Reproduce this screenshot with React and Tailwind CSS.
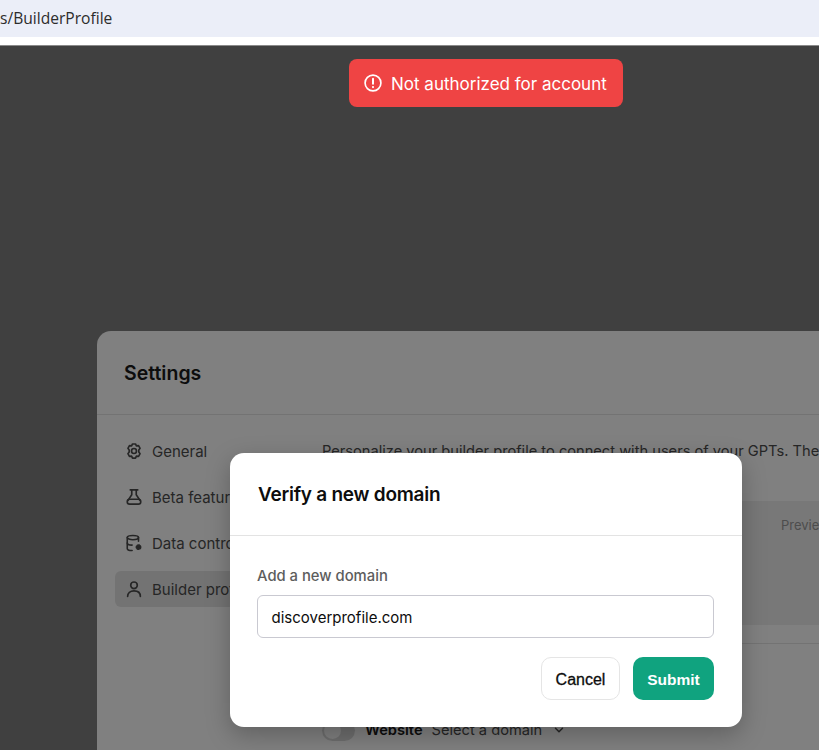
import React from "react";
import { ChevronDown } from "lucide-react";

function GearIcon() {
  return (
    <svg width="18" height="18" viewBox="0 0 24 24" fill="none" stroke="currentColor" strokeWidth="2.2" strokeLinejoin="round">
      <path d="M10 2.6h4l1.2 2.6 2.9-.3 2 3.5L18.4 10.7v2.6l1.7 2.3-2 3.5-2.9-.3L14 21.4h-4l-1.2-2.6-2.9.3-2-3.5 1.7-2.3v-2.6L3.9 8.4l2-3.5 2.9.3z" />
      <circle cx="12" cy="12" r="3.3" />
    </svg>
  );
}

function FlaskIcon() {
  return (
    <svg width="18" height="18" viewBox="0 0 24 24" fill="none" stroke="currentColor" strokeWidth="2.2" strokeLinecap="round" strokeLinejoin="round">
      <path d="M7 2.5h10" />
      <path d="M9 2.5v6.5L4 16.5" />
      <path d="M15 2.5v6.5l5 7.5" />
      <rect x="3" y="15" width="18" height="6.5" rx="3.2" />
    </svg>
  );
}

function DataIcon() {
  return (
    <svg width="18" height="18" viewBox="0 0 24 24" fill="none" stroke="currentColor" strokeWidth="2.1" strokeLinecap="round">
      <ellipse cx="10.5" cy="4.8" rx="7.5" ry="2.8" />
      <path d="M3 4.8v14.4c0 1.6 2.6 2.8 6.5 2.8" />
      <path d="M18 4.8v4.7" />
      <path d="M3 12c0 1.6 2.6 2.8 6.5 2.8" />
      <circle cx="18" cy="17.5" r="2.5" fill="currentColor" strokeWidth="2.8" strokeDasharray="1.8 1.4" />
    </svg>
  );
}

function UserIcon() {
  return (
    <svg width="18" height="18" viewBox="0 0 24 24" fill="none" stroke="currentColor" strokeWidth="2.2" strokeLinecap="round">
      <circle cx="12" cy="7" r="4.4" />
      <path d="M3.5 22c0-5 3.6-7.5 8.5-7.5s8.5 2.5 8.5 7.5" />
    </svg>
  );
}

function AlertIcon() {
  return (
    <svg width="20" height="20" viewBox="0 0 24 24" fill="none" stroke="currentColor" strokeWidth="2" strokeLinecap="round">
      <circle cx="12" cy="12" r="9.5" />
      <path d="M12 7v6" strokeWidth="2.4" />
      <path d="M12 16.8v.1" strokeWidth="2.6" />
    </svg>
  );
}

const menu = [
  { label: "General", icon: <GearIcon /> },
  { label: "Beta features", icon: <FlaskIcon /> },
  { label: "Data controls", icon: <DataIcon /> },
  { label: "Builder profile", icon: <UserIcon />, active: true },
];

export default function App() {
  return (
    <div className="relative flex h-[750px] w-[819px] flex-col overflow-hidden bg-[#404040] font-['Inter',sans-serif]">
      <div className="h-[37px] shrink-0 bg-[#ebeef8] text-[15.6px] leading-[37px] text-[#2c2c2c] font-['Open_Sans',sans-serif]">s/BuilderProfile</div>
      <div className="h-[9px] shrink-0 border-b border-b-[#8a8a8a] bg-white"></div>

      <div className="flex-1 pl-[97px] pt-[285px]">
        <div className="h-[500px] w-[800px] rounded-tl-[14px] bg-[#808080]">
          <div className="flex h-[84px] items-center border-b border-[#737373] pl-[27px] pt-[2px] text-[19.5px] font-semibold text-[#0d0d0d]">Settings</div>
          <div className="flex pl-[18px] pt-[18px]">
            <div className="flex w-[207px] shrink-0 flex-col gap-[10px]">
              {menu.map((item) => (
                <div key={item.label} className={`flex h-[36px] items-center gap-[9px] rounded-[6px] pl-[10px] text-[15px] text-[#262626] ${item.active ? "bg-[#737373]" : ""}`}>
                  {item.icon}
                  <span className="pt-[3px]">{item.label}</span>
                </div>
              ))}
            </div>
            <div className="min-w-0 flex-1 text-[14.65px] text-[#262626]">
              <p className="whitespace-nowrap pt-[9px] leading-[18px]">Personalize your builder profile to connect with users of your GPTs. These</p>
              <div className="mt-[41px] h-[124px] rounded-[8px] bg-[#787878] pl-[459px] pt-[15px] text-[13px] text-[#4d4d4d]">Preview</div>
              <div className="mt-[18px] h-px bg-[#737373]"></div>
              <div className="mt-[75px] flex items-center">
                <span className="flex h-[21px] w-[33px] items-center rounded-full bg-[#6e6e6e] pl-[2px]">
                  <span className="h-[17px] w-[17px] rounded-full bg-[#808080]"></span>
                </span>
                <span className="ml-[10px] pt-[1px] font-semibold text-[#0d0d0d]">Website</span>
                <span className="ml-[9px] pt-[1px] text-[#262626]">Select a domain</span>
                <ChevronDown size={14} strokeWidth={2.5} className="ml-[10px]" />
              </div>
            </div>
          </div>
        </div>
      </div>

      <div className="absolute left-[349px] top-[59px] flex h-[48px] w-[274px] items-center gap-[8px] rounded-[8px] bg-[#ef4444] pl-[14px] text-[17px] text-white">
        <AlertIcon />
        <span className="whitespace-nowrap pt-[3px]">Not authorized for account</span>
      </div>

      <div className="absolute left-[230px] top-[453px] h-[274px] w-[512px] rounded-[14px] bg-white shadow-[0_8px_24px_rgba(0,0,0,0.25)]">
        <div className="flex h-[83px] items-center border-b border-[#e3e3e3] pl-[28px] pt-[2px] text-[19px] font-semibold tracking-[-0.25px] text-[#0d0d0d]">Verify a new domain</div>
        <div className="pl-[27px] pr-[28px] pt-[30px]">
          <div className="pt-[1px] text-[14.8px] font-medium leading-[18px] text-[#5d5d5d]">Add a new domain</div>
          <div className="mt-[10px] flex h-[43px] items-center rounded-[6px] border-[1.5px] border-[#c9c9d1] pl-[13.5px] pt-[3px] text-[15px] text-[#0d0d0d]">discoverprofile.com</div>
          <div className="mt-[19px] flex justify-end gap-[13px]">
            <button className="h-[43px] w-[79px] rounded-[10px] border border-[#e5e5e5] bg-white pt-[2px] font-['Liberation_Sans',sans-serif] text-[16px] text-[#0d0d0d] [-webkit-text-stroke:0.3px]">Cancel</button>
            <button className="h-[43px] w-[81px] rounded-[10px] bg-[#10a37f] pt-[2px] font-['Liberation_Sans',sans-serif] text-[15.5px] font-bold text-white">Submit</button>
          </div>
        </div>
      </div>
    </div>
  );
}
